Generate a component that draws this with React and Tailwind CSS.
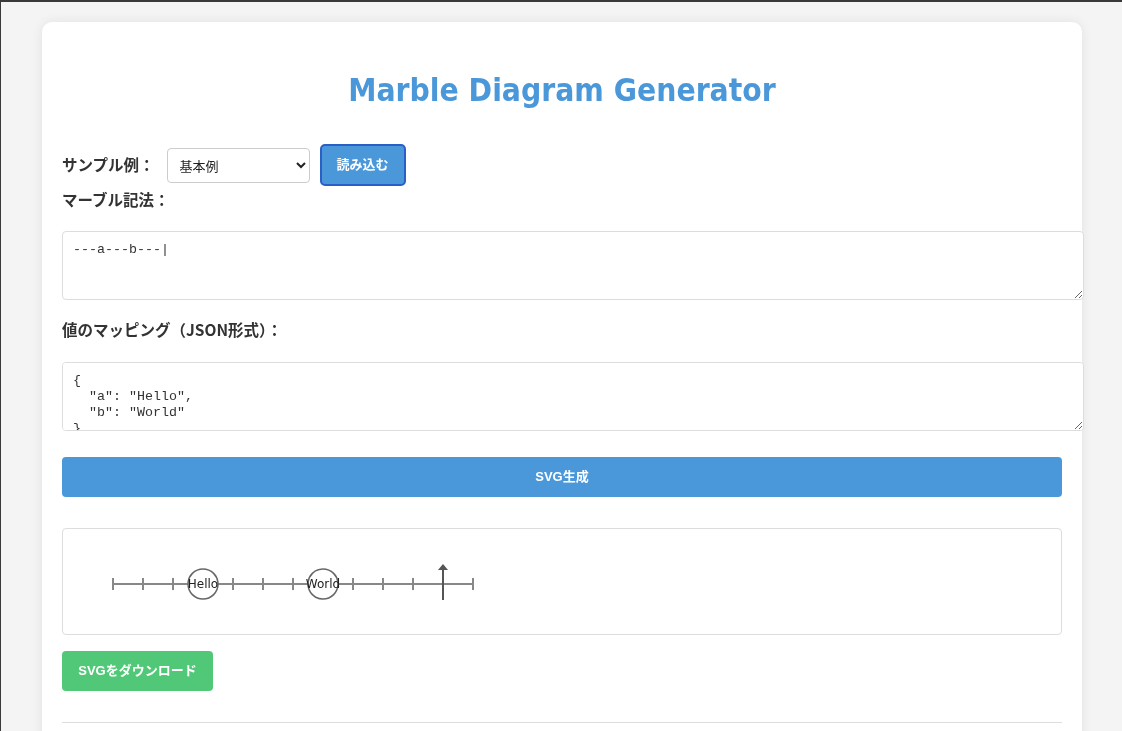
import React from "react";

function Marble() {
  const ticks = [];
  for (let i = 0; i <= 12; i++) ticks.push(30 + i * 30);
  return (
    <svg width="440" height="80" viewBox="0 0 440 80" className="font-['DejaVu_Sans',sans-serif]">
      <line x1="30" y1="41" x2="390" y2="41" stroke="#888" strokeWidth="2" />
      {ticks.map((x) => (
        <line key={x} x1={x} y1="35" x2={x} y2="47" stroke="#888" strokeWidth="2" />
      ))}
      {[
        [120, "Hello"],
        [240, "World"],
      ].map(([x, t]) => (
        <g key={t}>
          <circle cx={x} cy="41" r="15" fill="#fff" stroke="#666" strokeWidth="1.5" />
          <text x={x} y="45" textAnchor="middle" fontSize="12" fill="#222">
            {t}
          </text>
        </g>
      ))}
      <line x1="360" y1="27" x2="360" y2="57" stroke="#555" strokeWidth="2" />
      <polygon points="355,27 365,27 360,21" fill="#555" />
    </svg>
  );
}

export default function App() {
  return (
    <div className="min-h-screen bg-[#f4f4f4] border-t-2 border-l border-[#3a3a3a] pt-[20px] font-['Noto_Sans_CJK_JP','Liberation_Sans',sans-serif]">
      <div className="ml-[41px] w-[1040px] bg-white rounded-[10px] shadow-[0_0_12px_rgba(0,0,0,0.08)] px-[20px] pt-[20px] pb-[40px] text-[#333]">
        <h1 className="mt-[28px] text-center text-[31.5px] leading-[40px] font-bold text-[#4a98d9] font-['DejaVu_Sans_Condensed','DejaVu_Sans',sans-serif]">
          Marble Diagram Generator
        </h1>

        <div className="mt-[34px] flex items-center h-[42px]">
          <span className="text-[15.5px] font-bold mr-[12px]">サンプル例：</span>
          <select
            className="w-[143px] h-[35px] border border-[#ccc] rounded-[4px] bg-white px-[8px] text-[13px] text-[#222]"
            defaultValue="basic"
          >
            <option value="basic">基本例</option>
          </select>
          <button className="ml-[10px] h-[42px] px-[15px] bg-[#4a98d9] border-2 border-[#2a5fc6] rounded-[5px] text-white text-[13px] font-bold font-['Liberation_Sans','Noto_Sans_CJK_JP',sans-serif]">
            読み込む
          </button>
        </div>

        <div className="mt-[2px] h-[22px] leading-[22px] text-[15.5px] font-bold">マーブル記法：</div>

        <textarea
          className="block mt-[21px] w-[1022px] h-[69px] border border-[#ddd] rounded-[4px] bg-white p-[10px] text-[13.33px] leading-[16px] text-[#333] font-['Liberation_Mono',monospace]"
          defaultValue="---a---b---|"
        />

        <div className="mt-[18px] h-[22px] leading-[22px] text-[15.5px] font-bold">値のマッピング（JSON形式）：</div>

        <textarea
          className="block mt-[22px] w-[1022px] h-[69px] border border-[#ddd] rounded-[4px] bg-white p-[10px] text-[13.33px] leading-[16px] text-[#333] overflow-y-scroll font-['Liberation_Mono',monospace] [&::-webkit-scrollbar]:w-[15px] [&::-webkit-scrollbar-track]:bg-[#fafafa] [&::-webkit-scrollbar-track]:border-l [&::-webkit-scrollbar-track]:border-[#e8e8e8] [&::-webkit-scrollbar-thumb]:bg-[#c1c1c1] [&::-webkit-scrollbar-thumb]:rounded-full [&::-webkit-scrollbar-thumb]:border-[4px] [&::-webkit-scrollbar-thumb]:border-solid [&::-webkit-scrollbar-thumb]:border-[#fafafa]"
          defaultValue={'{\n  "a": "Hello",\n  "b": "World"\n}'}
        />

        <button className="block mt-[26px] w-[1000px] h-[40px] bg-[#4a98d9] rounded-[4px] text-white text-[13px] font-bold font-['Liberation_Sans','Noto_Sans_CJK_JP',sans-serif]">
          SVG生成
        </button>

        <div className="mt-[31px] h-[107px] border border-[#ddd] rounded-[4px] pt-[14px] pl-[20px]">
          <Marble />
        </div>

        <button className="block mt-[16px] w-[151px] h-[40px] bg-[#50c878] rounded-[4px] text-white text-[13px] font-bold font-['Liberation_Sans','Noto_Sans_CJK_JP',sans-serif]">
          SVGをダウンロード
        </button>

        <div className="mt-[31px] border-t border-[#ddd]" />
      </div>
    </div>
  );
}
